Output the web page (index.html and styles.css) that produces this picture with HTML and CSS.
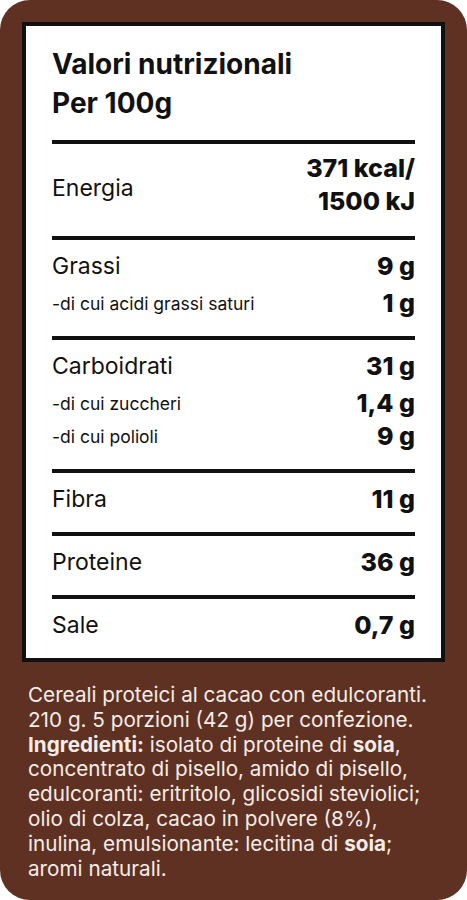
FILE: index.html
```html
<!DOCTYPE html>
<html lang="it">
<head>
  <meta charset="UTF-8" />
  <meta name="viewport" content="width=device-width, initial-scale=1.0"/>
  <title>Valori nutrizionali</title>
  <link rel="stylesheet" href="styles.css">
</head>
<body>

  <div class="card">
    <div class="facts">
      <h1 class="facts-title">Valori nutrizionali<br>Per 100g</h1>

      <div class="section energy">
        <span class="name">Energia</span>
        <span class="val">371 kcal/<br>1500 kJ</span>
      </div>

      <div class="section">
        <div class="row main"><span class="name">Grassi</span><span class="val">9 g</span></div>
        <div class="row sub"><span class="name">-di cui acidi grassi saturi</span><span class="val">1 g</span></div>
      </div>

      <div class="section">
        <div class="row main"><span class="name">Carboidrati</span><span class="val">31 g</span></div>
        <div class="row sub"><span class="name">-di cui zuccheri</span><span class="val">1,4 g</span></div>
        <div class="row sub"><span class="name">-di cui polioli</span><span class="val">9 g</span></div>
      </div>

      <div class="section">
        <div class="row"><span class="name">Fibra</span><span class="val">11 g</span></div>
      </div>

      <div class="section">
        <div class="row"><span class="name">Proteine</span><span class="val">36 g</span></div>
      </div>

      <div class="section">
        <div class="row"><span class="name">Sale</span><span class="val">0,7 g</span></div>
      </div>
    </div>

    <p class="ingredients">
      Cereali proteici al cacao con edulcoranti.<br>
      210 g. 5 porzioni (42 g) per confezione.<br>
      <b>Ingredienti:</b> isolato di proteine di <b>soia</b>,<br>
      concentrato di pisello, amido di pisello,<br>
      edulcoranti: eritritolo, glicosidi steviolici;<br>
      olio di colza, cacao in polvere (8%),<br>
      inulina, emulsionante: lecitina di <b>soia</b>;<br>
      aromi naturali.
    </p>
  </div>

</body>
</html>
```

FILE: styles.css
```css
body {
  margin: 0;
  background: #fff;
  font-family: Inter, 'Noto Sans', sans-serif;
  color: #111;
}
.card {
  width: 467px;
  height: 900px;
  box-sizing: border-box;
  padding: 22px;
  background: #5f3123;
  border-radius: 30px;
}
.facts {
  background: #fff;
  border: 4px solid #111;
  padding: 0 26px;
}
.facts-title {
  margin: 0;
  padding: 19px 0 17px;
  font-size: 28px;
  line-height: 39px;
  font-weight: 700;
}
.section {
  border-top: 4px solid #111;
  padding: 10px 0 16px;
}
.row, .energy {
  display: flex;
  justify-content: space-between;
  align-items: center;
  line-height: 33px;
}
.energy {
  padding: 8px 0 18px;
}
.energy .name {
  padding-top: 7px;
}
.name {
  font-size: 23px;
}
.val {
  font-size: 25px;
  font-weight: 800;
  text-align: right;
}
.row.main {
  margin-bottom: 4px;
}
.row.sub .name {
  font-size: 17.5px;
}
.ingredients {
  margin: 21px 6px 0;
  color: #f4ece6;
  font-size: 20.7px;
  line-height: 24.8px;
}
.ingredients b {
  font-weight: 700;
}
```
